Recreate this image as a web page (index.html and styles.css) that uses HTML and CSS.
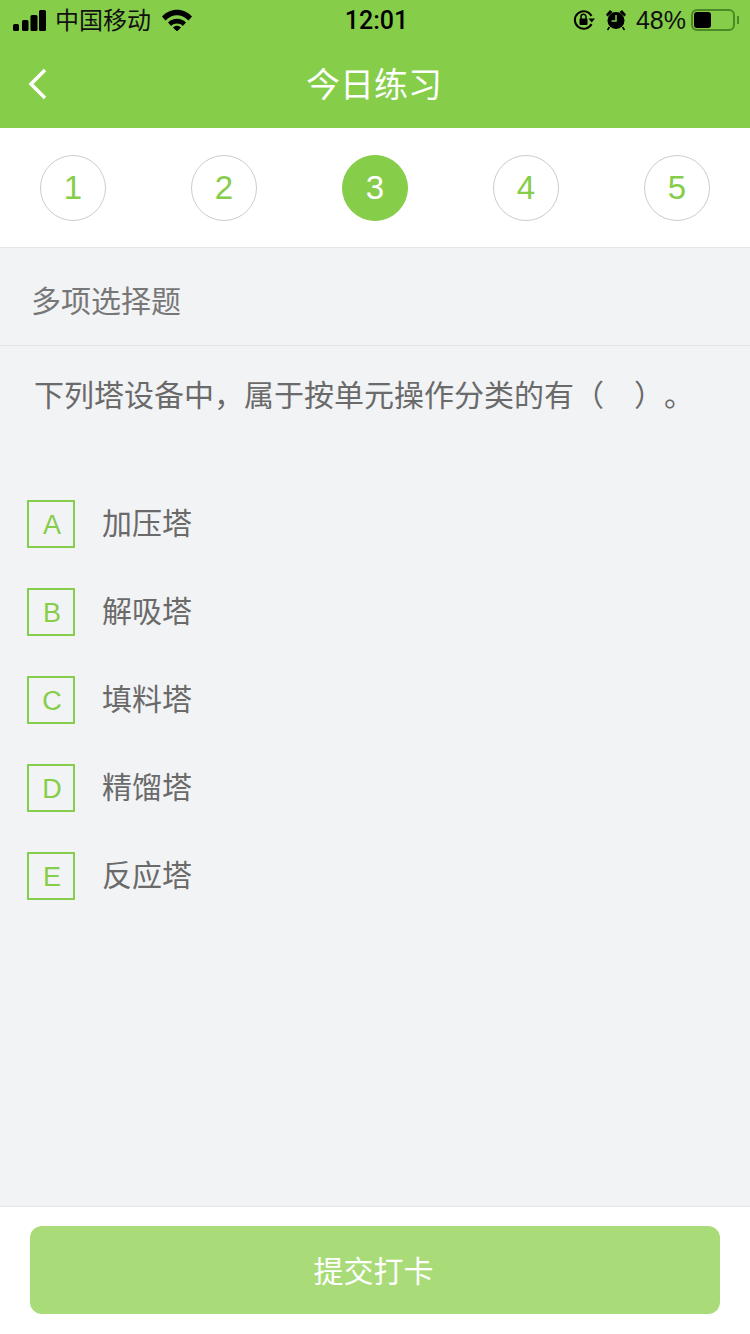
FILE: index.html
```html
<!DOCTYPE html>
<html lang="zh-CN">
<head>
    <meta charset="UTF-8">
    <meta name="viewport" content="width=device-width, initial-scale=1.0">
    <title>今日练习</title>
    <link rel="stylesheet" href="styles.css">
</head>
<body>
    <div class="page">
        <div class="header">
            <div class="status">
                <div class="status-left">
                    <svg class="signal" width="34" height="21" viewBox="0 0 34 21"><rect x="0" y="14" width="6" height="7" rx="1.5"/><rect x="9" y="10" width="6.500" height="11" rx="1.5"/><rect x="17.500" y="5" width="7" height="16" rx="1.5"/><rect x="26" y="0" width="7" height="21" rx="1.5"/></svg>
                    <span class="carrier">中国移动</span>
                    <svg class="wifi" width="30" height="22" viewBox="0 0 30 22"><path d="M0 7.500C8-1.500 22-1.500 30 7.500L26.500 11.500C19.500 4.500 10.500 4.500 3.500 11.500Z"/><path d="M6 13.500C11 8.500 19 8.500 24 13.500L20.800 17C17.500 13.800 12.500 13.800 9.200 17Z"/><path d="M11 18.500C13.500 16.300 16.500 16.300 19 18.500L15 22.500Z"/></svg>
                </div>
                <span class="time">12:01</span>
                <div class="status-right">
                    <svg class="lock" width="22" height="22" viewBox="0 0 22 22"><path d="M18.500 15A8.800 8.800 0 1 1 18.500 7" fill="none" stroke="#000" stroke-width="2"/><path d="M15.500 9.500H22L18.700 13.500Z"/><rect x="6.500" y="9.500" width="8" height="6.500" rx="1"/><path d="M8 10V7.800a2.500 2.500 0 0 1 5 0V10" fill="none" stroke="#000" stroke-width="1.500"/></svg>
                    <svg class="alarm" width="22" height="22" viewBox="0 0 22 22"><circle cx="11" cy="11.500" r="8.500"/><path d="M1 5.500 5 1 7.500 3 2.500 7.500ZM21 5.500 17 1 14.500 3 19.500 7.500Z"/><path d="M4.500 18 2.500 21M17.500 18 19.500 21" stroke="#000" stroke-width="1.500"/><path d="M11 6V12H6.500" fill="none" stroke="#86cd4a" stroke-width="1.500"/></svg>
                    <span class="battery-pct">48%</span>
                    <div class="battery"><div class="battery-fill"></div></div>
                    <div class="battery-cap"></div>
                </div>
            </div>
            <div class="navbar">
                <svg class="back" width="20" height="32" viewBox="0 0 20 32"><path d="M17 2 3 16 17 30" fill="none" stroke="#fff" stroke-width="3.500"/></svg>
                <h1 class="title">今日练习</h1>
            </div>
        </div>

        <div class="steps">
            <div class="step">1</div>
            <div class="step">2</div>
            <div class="step active">3</div>
            <div class="step">4</div>
            <div class="step">5</div>
        </div>

        <div class="content">
            <div class="type">多项选择题</div>
            <div class="question">下列塔设备中，属于按单元操作分类的有（&nbsp;&nbsp;&nbsp;）。</div>
            <div class="options">
                <div class="option"><span class="letter">A</span><span class="label">加压塔</span></div>
                <div class="option"><span class="letter">B</span><span class="label">解吸塔</span></div>
                <div class="option"><span class="letter">C</span><span class="label">填料塔</span></div>
                <div class="option"><span class="letter">D</span><span class="label">精馏塔</span></div>
                <div class="option"><span class="letter">E</span><span class="label">反应塔</span></div>
            </div>
        </div>

        <div class="footer">
            <div class="submit">提交打卡</div>
        </div>
    </div>
</body>
</html>
```

FILE: styles.css
```css
* {
    box-sizing: border-box;
}
body {
    margin: 0;
    background-color: #f2f3f5;
    font-family: "Liberation Sans", "Noto Sans CJK SC", sans-serif;
}
.page {
    display: flex;
    flex-direction: column;
    height: 1334px;
    overflow: hidden;
}
.header {
    height: 128px;
    background-color: #86cd4a;
    flex-shrink: 0;
}
.status {
    display: grid;
    grid-template-columns: 1fr auto 1fr;
    align-items: center;
    height: 40px;
    padding: 0 11px 0 13px;
    color: #000;
}
.status-left, .status-right {
    display: flex;
    align-items: center;
}
.status-right {
    justify-content: flex-end;
}
.carrier {
    font-size: 24px;
    margin-left: 8px;
    padding-bottom: 4px;
    color: #111;
}
.wifi {
    margin-left: 11px;
}
.time {
    font-family: Roboto, sans-serif;
    font-size: 25px;
    font-weight: 500;
    margin-left: 1px;
}
.alarm {
    margin-left: 10px;
}
.battery-pct {
    font-size: 25px;
    margin-left: 9px;
    color: #111;
}
.battery {
    width: 44px;
    height: 22px;
    margin-left: 5px;
    padding: 1px;
    border: 2px solid #4d8a25;
    border-radius: 6px;
}
.battery-fill {
    width: 17px;
    height: 100%;
    background-color: #000;
    border-radius: 3px;
}
.battery-cap {
    width: 2px;
    height: 8px;
    margin-left: 2px;
    background-color: #4d8a25;
}
.navbar {
    display: grid;
    grid-template-columns: 1fr auto 1fr;
    align-items: center;
    height: 88px;
    padding: 0 28px;
}
.title {
    margin: 0 2px 0 0;
    padding-bottom: 4px;
    font-size: 34px;
    font-weight: normal;
    color: #fff;
}
.steps {
    display: flex;
    justify-content: space-between;
    align-items: center;
    height: 120px;
    padding: 0 40px;
    background-color: #fff;
    border-bottom: 1px solid #e6e6e6;
    flex-shrink: 0;
}
.step {
    width: 66px;
    height: 66px;
    display: flex;
    align-items: center;
    justify-content: center;
    border: 1px solid #ccc;
    border-radius: 50%;
    font-size: 33px;
    color: #86cd4a;
}
.step.active {
    background-color: #86cd4a;
    border-color: #86cd4a;
    color: #fff;
}
.content {
    flex: 1;
}
.type {
    height: 98px;
    padding: 0 31px;
    line-height: 108px;
    font-size: 30px;
    color: #777;
    border-bottom: 1px solid #e6e6e6;
}
.question {
    padding: 28px 34px 0;
    font-size: 30px;
    line-height: 44px;
    color: #6a6a6a;
    white-space: nowrap;
    word-spacing: 1.7px;
    text-spacing-trim: space-all;
}
.options {
    display: flex;
    flex-direction: column;
    gap: 40px;
    margin-top: 82px;
    padding-left: 27px;
}
.option {
    display: flex;
    align-items: center;
    height: 48px;
}
.letter {
    width: 48px;
    height: 48px;
    display: flex;
    align-items: center;
    justify-content: center;
    padding: 3px 0 0 2px;
    border: 2px solid #86cd4a;
    font-size: 27px;
    color: #86cd4a;
}
.label {
    margin-left: 27px;
    padding-bottom: 6px;
    font-size: 30px;
    color: #6a6a6a;
}
.footer {
    height: 128px;
    padding: 19px 30px;
    background-color: #fff;
    border-top: 1px solid #e6e6e6;
    flex-shrink: 0;
}
.submit {
    height: 88px;
    display: flex;
    align-items: center;
    justify-content: center;
    padding: 0 3px 3px 0;
    background-color: #a9dc78;
    border-radius: 12px;
    font-size: 30px;
    color: #fff;
}
```
